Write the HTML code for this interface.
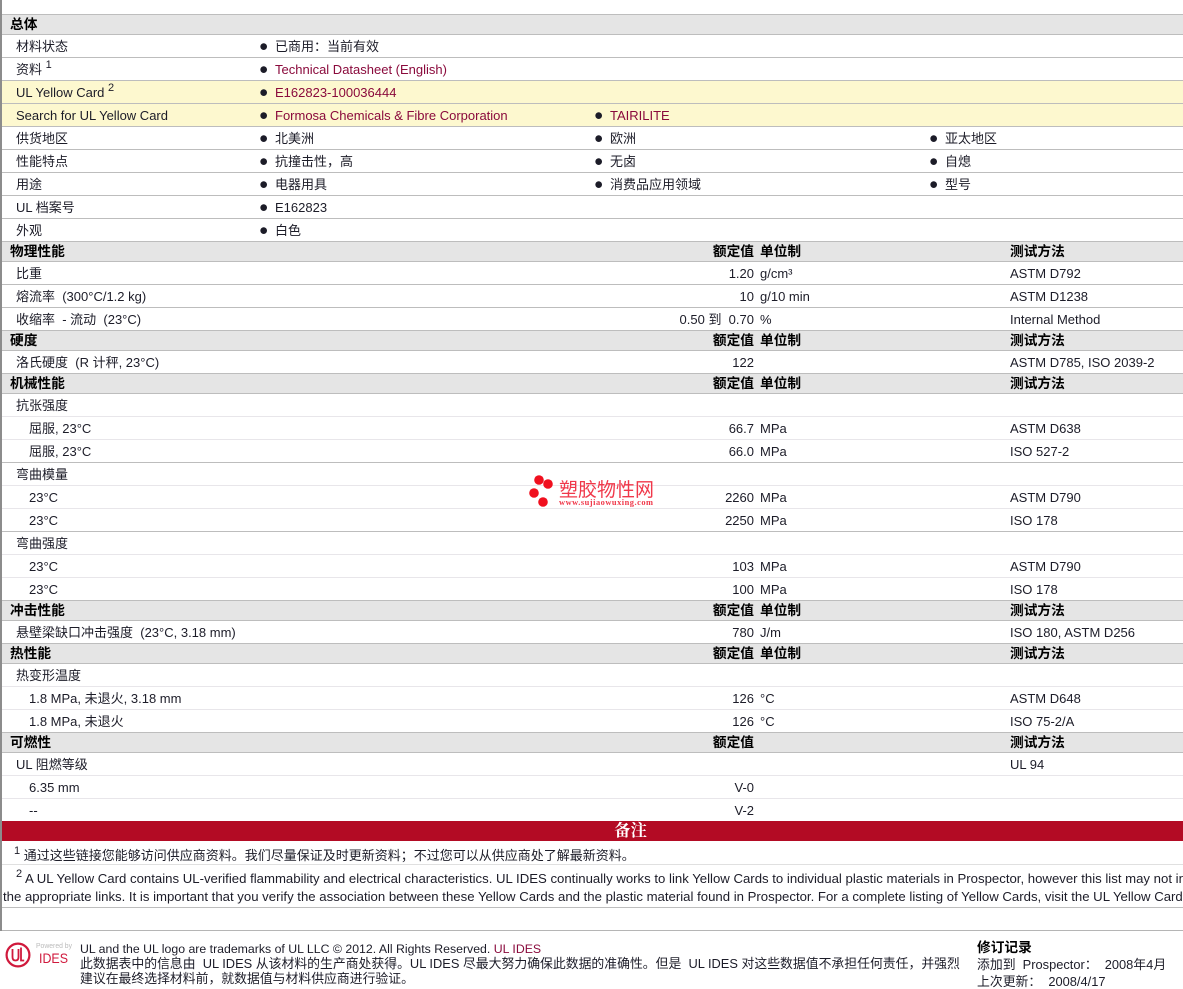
<!DOCTYPE html>
<html lang="zh"><head><meta charset="utf-8"><title>Datasheet</title>
<style>
html,body{margin:0;padding:0;background:#fff}
body{width:1183px;height:983px;overflow:hidden;position:relative;font:13px/1 "Liberation Sans","WenQuanYi Zen Hei","Noto Sans CJK SC",sans-serif;color:#1c1c28}
.r,.h{position:absolute;left:2px;width:1181px;box-sizing:border-box}
.r{height:23px;border-bottom:1px solid #e8e6ea;background:#fff}
.r.k{border-bottom-color:#bdbdbd}
.y{background:#fdf8cf}
.h{height:21px;background:#e5e5e5;border-top:1px solid #bdbdbd;border-bottom:1px solid #bdbdbd;font-weight:bold;color:#000}
.r span,.h span{position:absolute;top:0;white-space:nowrap;line-height:24px}
.h span{line-height:20px;font-size:13.7px}
.h .a{left:8px}
.a{left:14px}.s{left:27px}
.b{left:257px;font-size:15.5px}
.c{left:273px}.d{left:608px}.e{left:943px}
.b2{left:592px;font-size:15.5px}.b3{left:927px;font-size:15.5px}
.v{right:429px}.u{left:758px}.m{left:1008px}
i,em{font-style:normal;font-size:13px}
a{color:#8a0a3c;text-decoration:none}
sup{font-size:11px;line-height:0;vertical-align:6px}
.ln{position:absolute;white-space:nowrap}
</style></head><body>
<div style="position:absolute;left:0;top:0;width:2px;height:931px;background:#8c8c8c"></div>

<div class="h" style="top:14px"><span class="a">总体</span></div>
<div class="r k" style="top:35px"><span class="a"><i>材料状态</i></span><span class="b">●</span><span class="c"><i>已商用：当前有效</i></span></div>
<div class="r k" style="top:58px"><span class="a"><i>资料</i> <sup>1</sup></span><span class="b">●</span><span class="c"><a>Technical Datasheet (English)</a></span></div>
<div class="r k y" style="top:81px"><span class="a">UL Yellow Card <sup>2</sup></span><span class="b">●</span><span class="c"><a>E162823-100036444</a></span></div>
<div class="r k y" style="top:104px"><span class="a">Search for UL Yellow Card</span><span class="b">●</span><span class="c"><a>Formosa Chemicals &amp; Fibre Corporation</a></span><span class="b2">●</span><span class="d"><a>TAIRILITE</a></span></div>
<div class="r k" style="top:127px"><span class="a"><i>供货地区</i></span><span class="b">●</span><span class="c"><i>北美洲</i></span><span class="b2">●</span><span class="d"><i>欧洲</i></span><span class="b3">●</span><span class="e"><i>亚太地区</i></span></div>
<div class="r k" style="top:150px"><span class="a"><i>性能特点</i></span><span class="b">●</span><span class="c"><i>抗撞击性，高</i></span><span class="b2">●</span><span class="d"><i>无卤</i></span><span class="b3">●</span><span class="e"><i>自熄</i></span></div>
<div class="r k" style="top:173px"><span class="a"><i>用途</i></span><span class="b">●</span><span class="c"><i>电器用具</i></span><span class="b2">●</span><span class="d"><i>消费品应用领域</i></span><span class="b3">●</span><span class="e"><i>型号</i></span></div>
<div class="r k" style="top:196px"><span class="a">UL <i>档案号</i></span><span class="b">●</span><span class="c">E162823</span></div>
<div class="r k" style="top:219px"><span class="a"><i>外观</i></span><span class="b">●</span><span class="c"><i>白色</i></span></div>

<div class="h" style="top:241px"><span class="a">物理性能</span><span class="v">额定值</span><span class="u">单位制</span><span class="m">测试方法</span></div>
<div class="r k" style="top:262px"><span class="a"><i>比重</i></span><span class="v">1.20</span><span class="u">g/cm³</span><span class="m">ASTM D792</span></div>
<div class="r k" style="top:285px"><span class="a">熔流率&nbsp; (300°C/1.2 kg)</span><span class="v">10</span><span class="u">g/10 min</span><span class="m">ASTM D1238</span></div>
<div class="r k" style="top:308px"><span class="a">收缩率&nbsp; - 流动&nbsp; (23°C)</span><span class="v">0.50 到&nbsp; 0.70</span><span class="u">%</span><span class="m">Internal Method</span></div>

<div class="h" style="top:330px"><span class="a">硬度</span><span class="v">额定值</span><span class="u">单位制</span><span class="m">测试方法</span></div>
<div class="r k" style="top:351px"><span class="a"><em>洛氏硬度</em>&nbsp; (R 计秤, 23°C)</span><span class="v">122</span><span class="m">ASTM D785, ISO 2039-2</span></div>

<div class="h" style="top:373px"><span class="a">机械性能</span><span class="v">额定值</span><span class="u">单位制</span><span class="m">测试方法</span></div>
<div class="r" style="top:394px"><span class="a"><em>抗张强度</em></span></div>
<div class="r" style="top:417px"><span class="s"><em>屈服</em>, 23°C</span><span class="v">66.7</span><span class="u">MPa</span><span class="m">ASTM D638</span></div>
<div class="r k" style="top:440px"><span class="s"><em>屈服</em>, 23°C</span><span class="v">66.0</span><span class="u">MPa</span><span class="m">ISO 527-2</span></div>
<div class="r" style="top:463px"><span class="a"><em>弯曲模量</em></span></div>
<div class="r" style="top:486px"><span class="s">23°C</span><span class="v">2260</span><span class="u">MPa</span><span class="m">ASTM D790</span></div>
<div class="r k" style="top:509px"><span class="s">23°C</span><span class="v">2250</span><span class="u">MPa</span><span class="m">ISO 178</span></div>
<div class="r" style="top:532px"><span class="a"><em>弯曲强度</em></span></div>
<div class="r" style="top:555px"><span class="s">23°C</span><span class="v">103</span><span class="u">MPa</span><span class="m">ASTM D790</span></div>
<div class="r k" style="top:578px"><span class="s">23°C</span><span class="v">100</span><span class="u">MPa</span><span class="m">ISO 178</span></div>

<div class="h" style="top:600px"><span class="a">冲击性能</span><span class="v">额定值</span><span class="u">单位制</span><span class="m">测试方法</span></div>
<div class="r k" style="top:621px"><span class="a"><em>悬壁梁缺口冲击强度</em>&nbsp; (23°C, 3.18 mm)</span><span class="v">780</span><span class="u">J/m</span><span class="m">ISO 180, ASTM D256</span></div>

<div class="h" style="top:643px"><span class="a">热性能</span><span class="v">额定值</span><span class="u">单位制</span><span class="m">测试方法</span></div>
<div class="r" style="top:664px"><span class="a"><em>热变形温度</em></span></div>
<div class="r" style="top:687px"><span class="s">1.8 MPa, <em>未退火</em>, 3.18 mm</span><span class="v">126</span><span class="u">°C</span><span class="m">ASTM D648</span></div>
<div class="r k" style="top:710px"><span class="s">1.8 MPa, <em>未退火</em></span><span class="v">126</span><span class="u">°C</span><span class="m">ISO 75-2/A</span></div>

<div class="h" style="top:732px"><span class="a">可燃性</span><span class="v">额定值</span><span class="m">测试方法</span></div>
<div class="r" style="top:753px"><span class="a">UL <em>阻燃等级</em></span><span class="m">UL 94</span></div>
<div class="r" style="top:776px"><span class="s">6.35 mm</span><span class="v">V-0</span></div>
<div class="r" style="top:799px"><span class="s">--</span><span class="v">V-2</span></div>

<div style="position:absolute;left:2px;top:821px;width:1181px;height:20px;background:#b30b24;color:#fff;text-align:center;font:bold 16.4px/20px 'Liberation Serif','Noto Serif CJK SC',serif;text-indent:76px;box-sizing:border-box">备注</div>

<div style="position:absolute;left:2px;top:841px;width:1181px;height:24px;box-sizing:border-box;border-bottom:1px solid #e0e0e0;white-space:nowrap;line-height:30px;padding-left:12px"><sup>1</sup>&nbsp;<span style="font-size:13px">通过这些链接您能够访问供应商资料。我们尽量保证及时更新资料；不过您可以从供应商处了解最新资料。</span></div>

<div style="position:absolute;left:2px;top:865px;width:1181px;height:43px;box-sizing:border-box;border-bottom:1px solid #bdbdbd;overflow:hidden;white-space:nowrap;line-height:18px;padding-top:5px;padding-left:1px;font-size:13.18px"><span style="padding-left:13px"><sup>2</sup> A UL Yellow Card contains UL-verified flammability and electrical characteristics. UL IDES continually works to link Yellow Cards to individual plastic materials in Prospector, however this list may not include all of</span><br>the appropriate links. It is important that you verify the association between these Yellow Cards and the plastic material found in Prospector. For a complete listing of Yellow Cards, visit the UL Yellow Card Search.</div>

<div style="position:absolute;left:2px;top:930px;width:1181px;height:1px;background:#b5b5b5"></div>

<svg style="position:absolute;left:0;top:936px" width="76" height="40" viewBox="0 0 76 40">
<circle cx="18" cy="19" r="11.4" fill="none" stroke="#d0193c" stroke-width="2.2"/>
<path d="M12.5 13v8q0 3.5 3 3.5t3-3.5v-8" fill="none" stroke="#d0193c" stroke-width="1.8"/>
<path d="M21 11.5v13h3.2" fill="none" stroke="#d0193c" stroke-width="1.8"/>
<text x="36" y="12" font-family="Liberation Sans" font-size="7.5" fill="#bbb" textLength="36" lengthAdjust="spacingAndGlyphs">Powered by</text>
<text x="39" y="27" font-family="Liberation Sans" font-size="14" fill="#d0193c" textLength="29" lengthAdjust="spacingAndGlyphs">IDES</text>
</svg>

<div class="ln" style="left:80px;top:942px;font-size:12.3px;line-height:14px">UL and the UL logo are trademarks of UL LLC © 2012. All Rights Reserved. <a>UL IDES</a></div>
<div class="ln" style="left:80px;top:957px;font-size:12.85px;line-height:14px">此数据表中的信息由&nbsp; UL IDES 从该材料的生产商处获得。UL IDES 尽最大努力确保此数据的准确性。但是&nbsp; UL IDES 对这些数据值不承担任何责任，并强烈</div>
<div class="ln" style="left:80px;top:972px;font-size:12.85px;line-height:14px">建议在最终选择材料前，就数据值与材料供应商进行验证。</div>

<div class="ln" style="left:977px;top:941px;font-size:13.7px;font-weight:bold;line-height:14px;color:#000">修订记录</div>
<div class="ln" style="left:977px;top:958px;font-size:12.85px;line-height:14px">添加到&nbsp; Prospector：&nbsp; 2008年4月</div>
<div class="ln" style="left:977px;top:975px;font-size:12.85px;line-height:14px">上次更新：&nbsp; 2008/4/17</div>

<svg style="position:absolute;left:525px;top:470px" width="135" height="42" viewBox="0 0 135 42">
<circle cx="14" cy="10" r="4.8" fill="#f00f1e"/><circle cx="23" cy="14" r="4.8" fill="#f00f1e"/><circle cx="9" cy="23" r="4.8" fill="#f00f1e"/><circle cx="18" cy="32" r="4.8" fill="#f00f1e"/>
<text x="34" y="26" font-family="WenQuanYi Zen Hei,Noto Sans CJK SC,sans-serif" font-size="19" fill="#f0384a" textLength="95">塑胶物性网</text>
<text x="34" y="35" font-family="Liberation Serif,serif" font-size="8.4" font-weight="bold" fill="#f0384a" textLength="94">www.sujiaowuxing.com</text>
</svg>
</body></html>
